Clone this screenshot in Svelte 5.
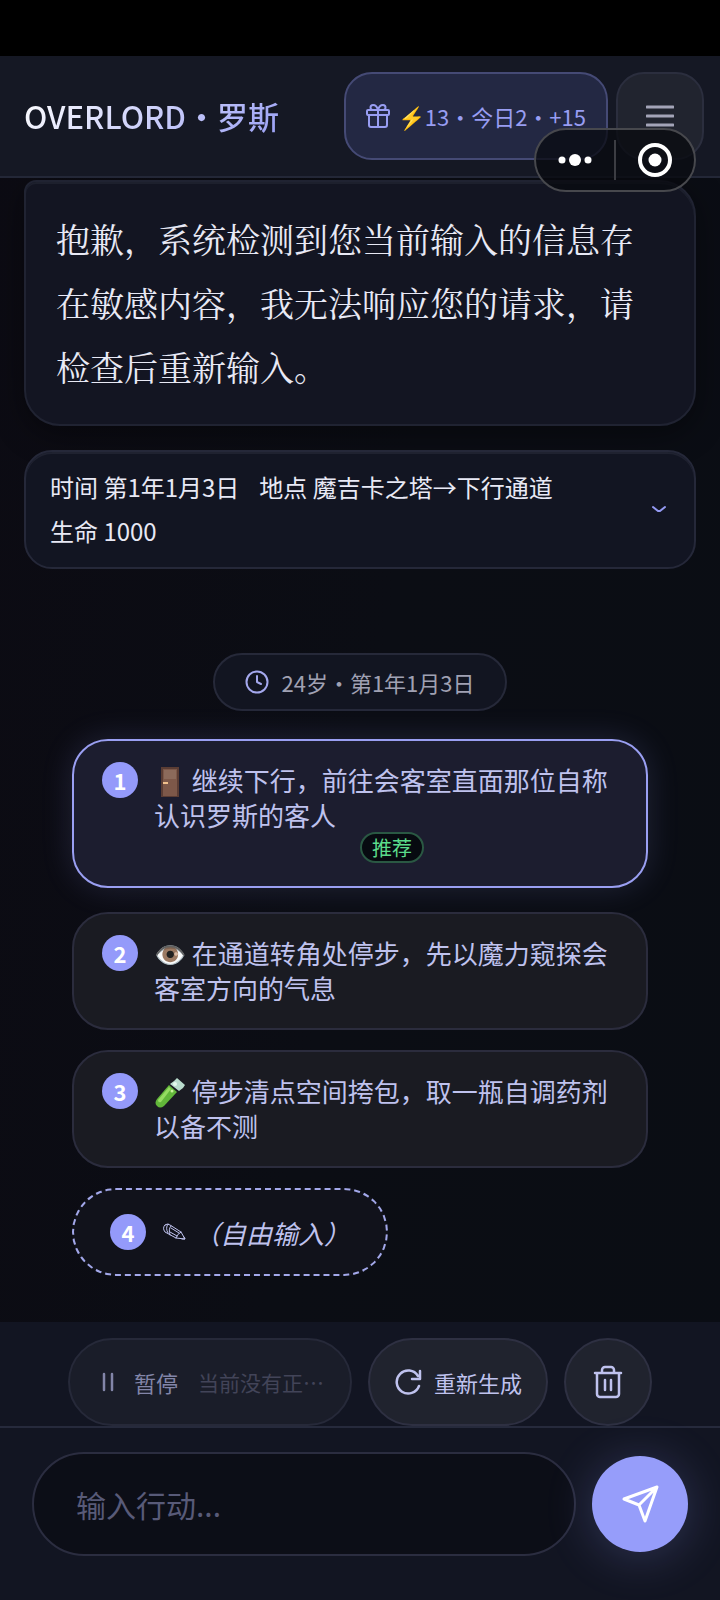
<script lang="ts">
  type Choice = { icon: string; text: string; recommended?: boolean };

  const choices: Choice[] = [
    { icon: "door", text: "继续下行，前往会客室直面那位自称认识罗斯的客人", recommended: true },
    { icon: "eye", text: "在通道转角处停步，先以魔力窥探会客室方向的气息" },
    { icon: "tube", text: "停步清点空间挎包，取一瓶自调药剂以备不测" },
  ];

  let action = $state("");
  let actionInput: HTMLInputElement;

  function pick(choice: Choice) {
    action = choice.text;
  }

  function send(event: SubmitEvent) {
    event.preventDefault();
    action = "";
  }
</script>

<div class="app">
  <div class="statusbar"></div>

  <header>
    <h1><span>OVERLORD・罗斯</span></h1>
    <button class="credits">
      <svg width="24" height="24" viewBox="0 0 24 24">
        <rect x="1" y="6" width="22" height="5" rx="1" />
        <path d="M3 11v10a2 2 0 0 0 2 2h14a2 2 0 0 0 2-2V11M12 6v17M12 6C11 2 9 1 7 1a2 2 0 0 0 0 5M12 6c1-4 3-5 5-5a2 2 0 0 1 0 5" />
      </svg>
      <span>⚡13・今日2・+15</span>
    </button>
    <button class="menu" aria-label="菜单">
      <svg width="28" height="24" viewBox="0 0 28 24">
        <path d="M1 3h26M1 12h26M1 21h26" />
      </svg>
    </button>

    <div class="capsule">
      <button aria-label="更多">
        <svg width="36" height="14" viewBox="0 0 36 14">
          <circle cx="5" cy="7" r="3.500" />
          <circle cx="18" cy="7" r="6" />
          <circle cx="31" cy="7" r="3.500" />
        </svg>
      </button>
      <button aria-label="关闭">
        <svg width="34" height="34" viewBox="0 0 34 34">
          <circle class="ring" cx="17" cy="17" r="15" />
          <circle cx="17" cy="17" r="6.500" />
        </svg>
      </button>
    </div>
  </header>

  <main>
    <article class="message">
      抱歉，系统检测到您当前输入的信息存在敏感内容，我无法响应您的请求，请检查后重新输入。
    </article>

    <button class="status">
      <span class="stats">
        <span>时间 第1年1月3日</span>
        <span>地点 魔吉卡之塔→下行通道</span>
        <span>生命 1000</span>
      </span>
      <svg width="18" height="12" viewBox="0 0 18 12">
        <path d="M3 4L8 8H10L15 4" />
      </svg>
    </button>

    <div class="age">
      <svg width="24" height="24" viewBox="0 0 24 24">
        <circle cx="12" cy="12" r="10.500" />
        <path d="M12 6v6l4 2" />
      </svg>
      <span>24岁・第1年1月3日</span>
    </div>

    <div class="choices">
      {#each choices as choice, idx}
        <button class="choice {choice.recommended ? 'recommended' : ''}" onclick={() => pick(choice)}>
          <span class="num">{idx + 1}</span>
          <span class="text">
            {#if choice.icon === "door"}
              <svg class="emoji" width="32" height="32" viewBox="0 0 32 32">
                <path fill="#5b3d34" d="M7 2h18v30H7z" />
                <path fill="#7d5849" d="M9 4h14v27H9z" />
                <path fill="#8b6a5b" d="M10 5h12v9H10z" />
                <path fill="#f0c08c" d="M9 17h5v2H9z" />
              </svg>
            {:else if choice.icon === "tube"}
              <svg class="emoji" width="32" height="32" viewBox="0 0 32 32">
                <path fill="#b9dccd" d="M20 5L23 2L31 9L29 12L25 15L16 8z" />
                <path fill="#62b73a" d="M15 9L23 16L10 30Q6 33 3 30Q0 27 3 23z" />
                <path fill="#96dc62" d="M15 11L17 13L7 26Q4 27 4 24z" />
                <circle fill="#e4f8ee" cx="21" cy="8" r="2" />
                <circle fill="#c8f29a" cx="18" cy="15" r="1.500" />
              </svg>
            {:else}
              👁️
            {/if}
            {choice.text}
            {#if choice.recommended}
              <span class="badge">推荐</span>
            {/if}
          </span>
        </button>
      {/each}
      <button class="free" onclick={() => actionInput.focus()}>
        <span class="num">4</span>
        <svg width="24" height="24" viewBox="0 0 24 24">
          <path d="M3 5Q5 3 8 5L19 12L23 19L14 18L3 12Q0 8 3 5ZM6 4Q3 8 6 13M9 6Q6 9 8 15M19 12Q15 14 14 18M9 8L17 13M8 12L15 16M20 19L23 19L22 17" />
        </svg>
        <em>（自由输入）</em>
      </button>
    </div>
  </main>

  <footer>
    <div class="tools">
      <button class="tool pause" disabled>
        <svg width="24" height="24" viewBox="0 0 24 24">
          <path d="M8 4v16M16 4v16" />
        </svg>
        <span>暂停</span>
        <span class="hint">当前没有正…</span>
      </button>
      <button class="tool">
        <svg width="28" height="28" viewBox="0 0 28 28">
          <path d="M24 8A11.500 11.500 0 1 0 25 18M26 3v8h-8" />
        </svg>
        <span>重新生成</span>
      </button>
      <button class="tool trash" aria-label="删除">
        <svg width="32" height="34" viewBox="0 0 32 34">
          <path d="M3 8h26M10 8V5a3 3 0 0 1 3-3h6a3 3 0 0 1 3 3v3M5 8v21a3 3 0 0 0 3 3h16a3 3 0 0 0 3-3V8M13 15v10M19 15v10" />
        </svg>
      </button>
    </div>
    <form onsubmit={send}>
      <input type="text" aria-label="输入行动" placeholder="输入行动..." bind:value={action} bind:this={actionInput} />
      <button class="send" aria-label="发送">
        <svg width="40" height="40" viewBox="0 0 40 40">
          <path d="M4 15L37 3L25 37L19 21ZM19 21L37 3" />
        </svg>
      </button>
    </form>
  </footer>
</div>

<style>
  :global(body) {
    background: #0a0b12;
  }

  .app {
    min-height: 100vh;
    display: flex;
    flex-direction: column;
    background: linear-gradient(100deg, #0c0b13, #0b0d14 50%, #0a0d14);
    color: #e8e9f5;
    font-family: "Noto Sans CJK SC", sans-serif;
    font-size: 22px;
  }

  button, input {
    margin: 0;
    box-sizing: border-box;
    font: inherit;
    color: inherit;
    cursor: pointer;
  }

  svg {
    flex: none;
    fill: none;
    stroke: currentColor;
    stroke-width: 2;
    stroke-linecap: round;
    stroke-linejoin: round;
  }

  .statusbar {
    height: 56px;
    background: #000;
  }

  header {
    position: relative;
    z-index: 1;
    display: flex;
    align-items: center;
    gap: 8px;
    padding: 16px 16px 16px 24px;
    background: #151824;
    border-bottom: 2px solid #232737;
  }

  h1 {
    flex: 1;
    margin: 0;
    font-size: 31px;
    font-weight: 500;
    line-height: 44px;
    white-space: nowrap;

    span {
      background: linear-gradient(135deg, #fff, #9aa0f5);
      background-clip: text;
      color: transparent;
    }
  }

  .credits, .menu {
    height: 88px;
    display: flex;
    align-items: center;
    justify-content: center;
    border-radius: 28px;
  }

  .credits {
    gap: 8px;
    padding: 0 20px;
    background: #232843;
    border: 2px solid #454a75;
    color: #989df2;
    line-height: 30px;
  }

  .menu {
    width: 88px;
    background: #21242f;
    border: 2px solid #2b2e3e;
    color: #a3a4b8;

    svg {
      stroke-width: 3;
    }
  }

  .capsule {
    position: absolute;
    top: 72px;
    right: 24px;
    display: flex;
    align-items: center;
    width: 162px;
    height: 64px;
    box-sizing: border-box;
    border: 2px solid #47484d;
    border-radius: 32px;
    background: rgba(8, 9, 15, 0.75);

    button {
      flex: 1;
      height: 40px;
      display: flex;
      align-items: center;
      justify-content: center;
      padding: 0;
      border: 0;
      background: none;
      color: #fff;
    }

    button + button {
      border-left: 2px solid #3c3d43;
    }

    svg {
      fill: currentColor;
      stroke: none;
    }

    .ring {
      fill: none;
      stroke: currentColor;
      stroke-width: 4;
    }
  }

  main {
    flex: 1;
    display: flex;
    flex-direction: column;
    padding: 2px 24px 40px;
  }

  .message {
    padding: 25px 30px;
    border: 2px solid #202332;
    border-radius: 12px 36px 36px 36px;
    background: #131522;
    box-shadow: 0 8px 32px rgba(0, 0, 0, 0.4), inset 0 2px 0 #1d202d;
    font-family: "Noto Serif CJK SC", "Noto Sans CJK SC", serif;
    font-size: 34px;
    line-height: 64px;
  }

  .status {
    display: flex;
    align-items: center;
    gap: 24px;
    margin-top: 24px;
    padding: 13px 24px 14px;
    border: 2px solid #252839;
    border-radius: 28px;
    background: #121522;
    box-shadow: inset 0 2px 0 #1f2230;
    color: #e8e9f5;
    font-size: 24px;
    line-height: 44px;
    text-align: left;

    svg {
      color: #949af3;
      margin-right: 2px;
    }
  }

  .stats {
    flex: 1;
    display: flex;
    flex-wrap: wrap;
    column-gap: 20px;
  }

  .age {
    align-self: center;
    display: flex;
    align-items: center;
    gap: 12px;
    margin: 84px 0 28px;
    padding: 11px 30px;
    border: 2px solid #262939;
    border-radius: 32px;
    background: #121521;
    color: #a0a1b3;
    line-height: 32px;

    svg {
      color: #a4a8ed;
    }
  }

  .choices {
    display: flex;
    flex-direction: column;
    gap: 20px;
    padding: 0 48px;
    color: #bfc2ee;
    font-size: 26px;
    line-height: 35px;
  }

  .choice {
    display: flex;
    align-items: flex-start;
    gap: 16px;
    padding: 21px 16px 23px 28px;
    border: 2px solid #2b2c3d;
    border-radius: 36px;
    background: #1a1b22;
    text-align: left;

    .text {
      flex: 1;
    }
  }

  .emoji {
    vertical-align: -6px;
    stroke: none;
  }

  .recommended {
    margin-bottom: 4px;
    border-color: #9a9ff2;
    background: #1c1d2f;
    box-shadow: 0 0 32px rgba(148, 154, 250, 0.16);
  }

  .num {
    flex: none;
    width: 36px;
    height: 36px;
    border-radius: 50%;
    background: #949afa;
    color: #fff;
    font-size: 22px;
    font-weight: 700;
    line-height: 36px;
    text-align: center;
  }

  .badge {
    display: block;
    width: fit-content;
    margin: 0 auto;
    padding: 0 10px;
    border: 2px solid #2a5843;
    border-radius: 16px;
    background: #070a10;
    color: #5bdc8b;
    font-size: 20px;
    line-height: 27px;
  }

  .free {
    align-self: flex-start;
    display: flex;
    align-items: center;
    height: 88px;
    padding: 0 36px;
    border: 2px dashed #a3a8ea;
    border-radius: 44px;
    background: #11121b;

    svg {
      margin: 0 8px 0 16px;
      stroke-width: 1;
    }
  }

  footer {
    background: #121522;
  }

  .tools {
    display: flex;
    justify-content: center;
    gap: 16px;
    padding: 16px 68px 0;
    color: #bfc2ee;
    line-height: 30px;
  }

  .tool {
    flex: none;
    height: 88px;
    display: flex;
    align-items: center;
    gap: 12px;
    padding: 0 24px;
    border: 2px solid #2e3042;
    border-radius: 44px;
    background: #20232e;

    svg {
      stroke-width: 2.5;
    }
  }

  .pause {
    flex: 0 1 284px;
    gap: 14px;
    padding: 0 26px;
    border-color: #262939;
    background: #1a1d29;
    color: #8285a8;
    white-space: nowrap;
    cursor: default;

    .hint {
      margin-left: 6px;
      color: #424458;
      font-size: 21px;
    }
  }

  .trash {
    width: 88px;
    padding: 0;
    justify-content: center;
  }

  form {
    display: flex;
    align-items: center;
    gap: 16px;
    padding: 24px 32px 44px;
    border-top: 2px solid #262a3c;
  }

  input {
    flex: 1;
    min-width: 0;
    height: 104px;
    padding: 0 42px;
    border: 2px solid #2b2d40;
    border-radius: 52px;
    background: #0c0e17;
    outline: none;
    font-size: 30px;
    cursor: text;

    &::placeholder {
      color: #585a78;
      opacity: 1;
    }
  }

  .send {
    flex: none;
    width: 96px;
    height: 96px;
    display: flex;
    align-items: center;
    justify-content: center;
    padding: 0;
    border: 0;
    border-radius: 50%;
    background: #969dfa;
    box-shadow: 0 4px 48px rgba(148, 154, 250, 0.24);
    color: #fff;

    svg {
      stroke-width: 3;
    }
  }
</style>
